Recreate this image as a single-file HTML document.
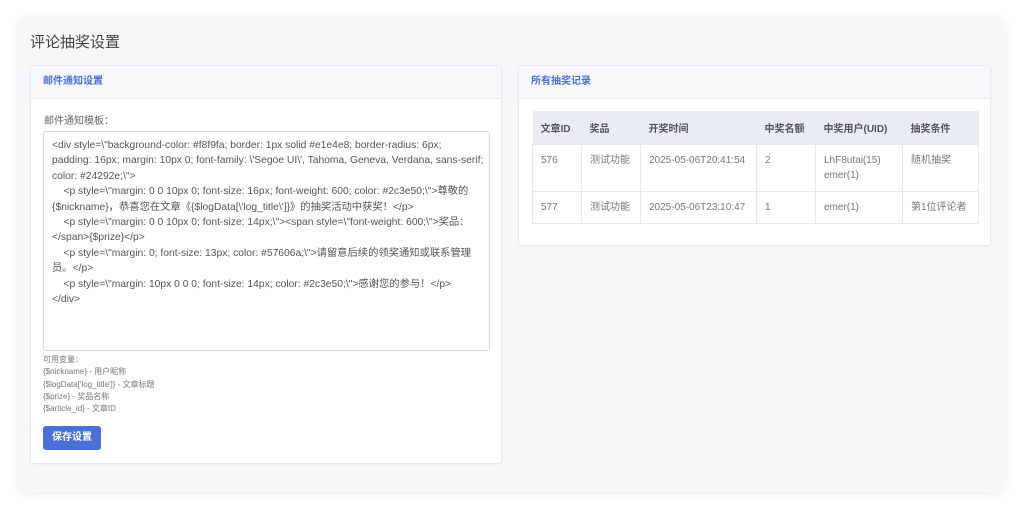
<!DOCTYPE html>
<html><head><meta charset="utf-8"><style>
*{box-sizing:border-box;margin:0;padding:0}
body{width:1024px;height:511px;background:#fff;font-family:"Liberation Sans","Noto Sans CJK SC",sans-serif;position:relative;overflow:hidden;color:#555}
.wrap{position:absolute;left:18px;top:16px;width:987px;height:476px;background:#f6f7f9;border-radius:10px;box-shadow:0 2px 10px rgba(0,0,0,.08)}
h1{position:absolute;left:30px;top:31px;font-size:15px;font-weight:normal;color:#444}
.card{position:absolute;background:#fff;border:1px solid #e6e8ec;border-radius:4px;box-shadow:0 1px 3px rgba(0,0,0,.04)}
.ch{height:33px;background:#f7f8fa;border-bottom:1px solid #e8eaee;padding:0 0 0 12px;line-height:32px;font-size:10px;font-weight:bold;color:#4a6fd6}
.lbl{position:absolute;left:13px;top:46px;font-size:10px;color:#666}
.ta{position:absolute;left:12px;top:65px;width:447px;height:220px;border:1px solid #d6d9de;border-radius:3px;padding:6px 3px 6px 8px;font-size:10.3px;line-height:15.4px;color:#555;white-space:pre;overflow:hidden}
.vars{position:absolute;left:12px;top:288px;font-size:8px;line-height:12.3px;color:#777}
.btn{position:absolute;left:12px;top:360px;width:58px;height:24px;background:#4a6fd6;color:#fff;border-radius:3px;font-size:10px;font-weight:bold;text-align:center;line-height:24px}
table{position:absolute;left:13px;top:45px;width:447px;border-collapse:collapse;font-size:10px}
th{background:#e9ecf3;height:33px;text-align:left;padding-left:8px;font-weight:bold;color:#555}
td{border:1px solid #e6e8ec;padding:8px 8px;vertical-align:top;color:#777;line-height:15px}
</style></head><body>
<div class="wrap"></div>
<h1>评论抽奖设置</h1>
<div class="card" style="left:30px;top:65px;width:472px;height:399px">
<div class="ch">邮件通知设置</div>
<div class="lbl">邮件通知模板：</div>
<div class="ta">&lt;div style=\"background-color: #f8f9fa; border: 1px solid #e1e4e8; border-radius: 6px;
padding: 16px; margin: 10px 0; font-family: \'Segoe UI\', Tahoma, Geneva, Verdana, sans-serif;
color: #24292e;\"&gt;
    &lt;p style=\"margin: 0 0 10px 0; font-size: 16px; font-weight: 600; color: #2c3e50;\"&gt;尊敬的
{$nickname}，恭喜您在文章《{$logData[\'log_title\']}》的抽奖活动中获奖！&lt;/p&gt;
    &lt;p style=\"margin: 0 0 10px 0; font-size: 14px;\"&gt;&lt;span style=\"font-weight: 600;\"&gt;奖品：
&lt;/span&gt;{$prize}&lt;/p&gt;
    &lt;p style=\"margin: 0; font-size: 13px; color: #57606a;\"&gt;请留意后续的领奖通知或联系管理
员。&lt;/p&gt;
    &lt;p style=\"margin: 10px 0 0 0; font-size: 14px; color: #2c3e50;\"&gt;感谢您的参与！&lt;/p&gt;
&lt;/div&gt;</div>
<div class="vars">可用变量：<br>{$nickname} - 用户昵称<br>{$logData['log_title']} - 文章标题<br>{$prize} - 奖品名称<br>{$article_id} - 文章ID</div>
<div class="btn">保存设置</div>
</div>
<div class="card" style="left:518px;top:65px;width:473px;height:181px">
<div class="ch">所有抽奖记录</div>
<table>
<tr><th style="width:49px">文章ID</th><th style="width:59px">奖品</th><th style="width:116px">开奖时间</th><th style="width:59px">中奖名额</th><th style="width:87px">中奖用户(UID)</th><th>抽奖条件</th></tr>
<tr style="height:47px"><td>576</td><td>测试功能</td><td>2025-05-06T20:41:54</td><td>2</td><td>LhF8utai(15)<br>emer(1)</td><td>随机抽奖</td></tr>
<tr style="height:31px"><td>577</td><td>测试功能</td><td>2025-05-06T23:10:47</td><td>1</td><td>emer(1)</td><td>第1位评论者</td></tr>
</table>
</div>
</body></html>
